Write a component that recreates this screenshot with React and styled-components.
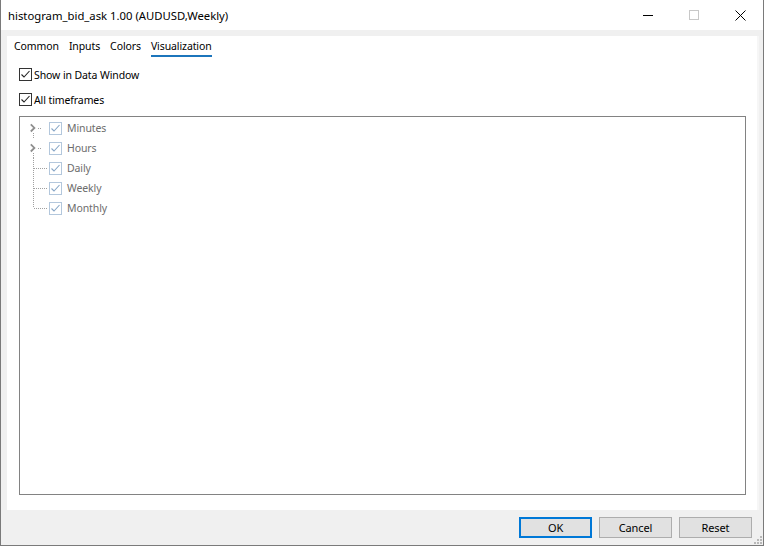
import React from "react";
import styled, { createGlobalStyle } from "styled-components";

const GlobalStyle = createGlobalStyle`
  html, body {
    margin: 0;
    padding: 0;
    background: #ffffff;
  }
  * {
    box-sizing: border-box;
  }
`;

const Screen = styled.div`
  width: 766px;
  height: 550px;
  overflow: hidden;
  background: #ffffff;
  display: flex;
  flex-direction: column;
  font-family: "Noto Sans", "Open Sans", sans-serif;
  font-size: 10.5px;
  letter-spacing: -0.1px;
  color: #000;
`;

const Window = styled.div`
  width: 764px;
  height: 546px;
  flex: none;
  display: flex;
  flex-direction: column;
  border: 1px solid #7a7a7a;
  border-top: none;
  background: #f0f0f0;
`;

const TitleBar = styled.div`
  height: 30px;
  flex: none;
  background: #ffffff;
  display: flex;
  align-items: center;
  padding-left: 7px;
`;

const Title = styled.div`
  flex: 1;
  font-size: 11.3px;
  letter-spacing: 0;
`;

const Controls = styled.div`
  display: flex;
  height: 30px;
`;

const ControlButton = styled.div`
  width: 46px;
  height: 30px;
  display: flex;
  align-items: center;
  justify-content: center;
`;

const Body = styled.div`
  flex: 1;
  display: flex;
  flex-direction: column;
  padding: 6px 4px 0 6px;
`;

const Panel = styled.div`
  height: 474px;
  background: #ffffff;
  border-right: 2px solid #f6f6f6;
  display: flex;
  flex-direction: column;
  padding: 0 0 0 12px;
`;

const Tabs = styled.div`
  display: flex;
  gap: 10px;
  height: 21px;
  margin-left: -5px;
  align-items: flex-start;
  padding-top: 3px;
`;

const Tab = styled.div`
  height: 18px;
  line-height: 14px;
  border-bottom: 2px solid ${(p) => (p.active ? "#1c75bc" : "transparent")};
`;

const OptionRow = styled.label`
  display: flex;
  align-items: center;
  gap: 2px;
  height: 13px;
  margin-top: ${(p) => p.top}px;
`;

const Box = styled.span`
  width: 13px;
  height: 13px;
  flex: none;
  border: 1px solid ${(p) => (p.disabled ? "#b3c7dc" : "#333333")};
  background: #ffffff;
  display: flex;
  align-items: center;
  justify-content: center;
`;

const TreeBox = styled.div`
  width: 727px;
  height: 379px;
  margin-top: 10px;
  border: 1px solid #828282;
  padding-top: 1px;
  display: flex;
  flex-direction: column;
`;

const TreeRow = styled.div`
  height: 20px;
  display: flex;
  align-items: center;
`;

const TreeLabel = styled.span`
  color: #6d6d6d;
  margin-left: 5px;
`;

const Footer = styled.div`
  flex: 1;
  display: flex;
  justify-content: flex-end;
  align-items: flex-start;
  gap: 7px;
  padding: 7px 7px 0 0;
  position: relative;
`;

const Button = styled.div`
  width: 73px;
  height: 21px;
  display: flex;
  align-items: center;
  justify-content: center;
  font-size: 11px;
  background: #e1e1e1;
  border: ${(p) => (p.primary ? "2px solid #0078d7" : "1px solid #adadad")};
`;

const Grip = styled.svg`
  position: absolute;
  right: -4px;
  bottom: 0;
`;

const ChartStrip = styled.div`
  flex: 1;
  background: #ffffff;
`;

const Check = ({ color }) => (
  <svg width="11" height="11" viewBox="0 0 11 11">
    <path d="M1.5 5.5 L4 8 L9.5 2" fill="none" stroke={color} strokeWidth="1.1" />
  </svg>
);

const Guide = ({ kind }) => {
  const dot = { stroke: "#a0a0a0", strokeWidth: 1, strokeDasharray: "1 1", fill: "none" };
  return (
    <svg width="29" height="20" viewBox="0 0 29 20">
      {kind === "node" && (
        <>
          <path d="M10.8 6.3 L14.4 9.9 L10.8 13.5" fill="none" stroke="#8f8f8f" strokeWidth="1.8" />
          <path d="M18 10.5 H22" {...dot} />
          <path d="M13.5 15 V20" {...dot} />
        </>
      )}
      {kind === "leaf" && (
        <>
          <path d="M13.5 0 V20" {...dot} />
          <path d="M14 10.5 H27" {...dot} />
        </>
      )}
      {kind === "last" && (
        <>
          <path d="M13.5 0 V10" {...dot} />
          <path d="M14 10.5 H27" {...dot} />
        </>
      )}
    </svg>
  );
};

const tree = [
  { label: "Minutes", kind: "node" },
  { label: "Hours", kind: "node" },
  { label: "Daily", kind: "leaf" },
  { label: "Weekly", kind: "leaf" },
  { label: "Monthly", kind: "last" },
];

const bars = [
  [23, 1, "#d8a0a0"], [30, 4, "#c0484f"], [38, 4, "#1f8a78"], [53, 4, "#c0484f"],
  [63, 1, "#9fb8b4"], [69, 4, "#1f8a78"], [101, 4, "#c0484f"], [109, 4, "#1f8a78"],
  [173, 4, "#c0484f"], [198, 4, "#1f8a78"], [207, 1, "#d8a0a0"], [215, 1, "#9fb8b4"],
  [583, 1, "#c0484f"],
];

export default function App() {
  return (
    <Screen>
      <GlobalStyle />
      <Window>
        <TitleBar>
          <Title>histogram_bid_ask 1.00 (AUDUSD,Weekly)</Title>
          <Controls>
            <ControlButton>
              <svg width="10" height="10" viewBox="0 0 10 10">
                <path d="M0 5.5 H10" stroke="#000" strokeWidth="1" />
              </svg>
            </ControlButton>
            <ControlButton>
              <svg width="10" height="10" viewBox="0 0 10 10">
                <rect x="0.5" y="0.5" width="9" height="9" fill="none" stroke="#c8c8c8" />
              </svg>
            </ControlButton>
            <ControlButton>
              <svg width="11" height="11" viewBox="0 0 11 11">
                <path d="M0.5 0.5 L10.5 10.5 M10.5 0.5 L0.5 10.5" stroke="#000" strokeWidth="1" />
              </svg>
            </ControlButton>
          </Controls>
        </TitleBar>
        <Body>
          <Panel>
            <Tabs>
              <Tab>Common</Tab>
              <Tab>Inputs</Tab>
              <Tab>Colors</Tab>
              <Tab active>Visualization</Tab>
            </Tabs>
            <OptionRow top={11}>
              <Box>
                <Check color="#222" />
              </Box>
              Show in Data Window
            </OptionRow>
            <OptionRow top={12}>
              <Box>
                <Check color="#222" />
              </Box>
              All timeframes
            </OptionRow>
            <TreeBox>
              {tree.map((item) => (
                <TreeRow key={item.label}>
                  <Guide kind={item.kind} />
                  <Box disabled>
                    <Check color="#86a5c6" />
                  </Box>
                  <TreeLabel>{item.label}</TreeLabel>
                </TreeRow>
              ))}
            </TreeBox>
          </Panel>
          <Footer>
            <Button primary>OK</Button>
            <Button>Cancel</Button>
            <Button>Reset</Button>
            <Grip width="12" height="12" viewBox="0 0 12 12">
              {[[9, 3], [6, 6], [9, 6], [3, 9], [6, 9], [9, 9]].map(([x, y]) => (
                <rect key={`${x}-${y}`} x={x} y={y} width="2" height="2" fill="#b8b8b8" />
              ))}
            </Grip>
          </Footer>
        </Body>
      </Window>
      <ChartStrip>
        <svg width="766" height="4" viewBox="0 0 766 4">
          {bars.map(([x, w, c]) => (
            <rect key={x} x={x} y="0" width={w} height="4" fill={c} />
          ))}
        </svg>
      </ChartStrip>
    </Screen>
  );
}
